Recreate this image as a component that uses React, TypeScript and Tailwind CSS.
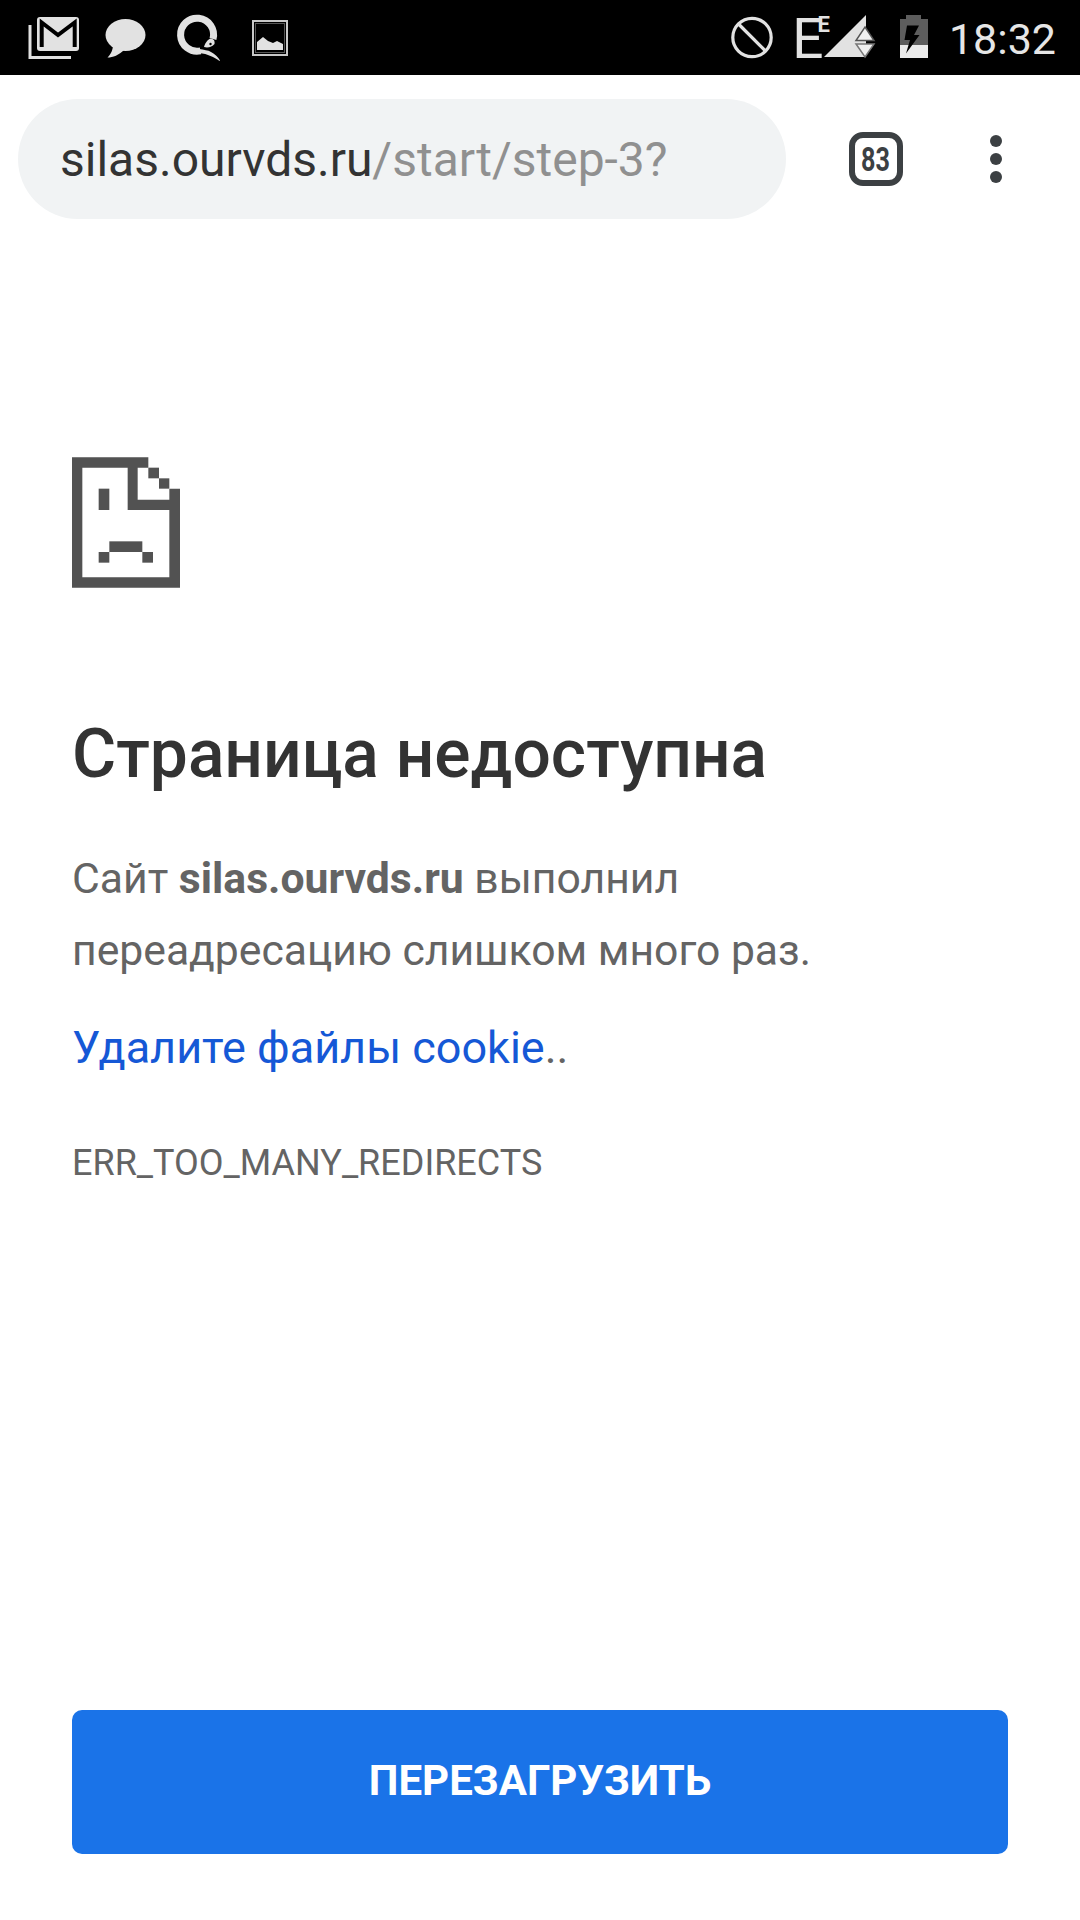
// Chrome on Android, "page unavailable" error screen.
const ICON = "#e2e2e2";

function StatusLeft() {
  return (
    <div className="flex items-start">
      <svg className="ml-[27px]" width="54" height="52" viewBox="27 12 54 52">
        <path d="M30 25V57.5H71" fill="none" stroke={ICON} strokeWidth="3" />
        <rect x="37" y="17" width="42" height="34" rx="3" fill={ICON} />
        <path d="M41.7 47V22.5L58 35L74.7 22.5V47" fill="none" stroke="#000" strokeWidth="4" />
      </svg>
      <svg className="ml-[24px]" width="41" height="52" viewBox="105 12 41 52">
        <ellipse cx="125.5" cy="35" rx="20" ry="16" fill={ICON} />
        <path d="M113 44C113 50 111 54 107.5 57.5C113 57.5 119 55 124 50Z" fill={ICON} />
      </svg>
      <svg className="ml-[29px]" width="46" height="52" viewBox="175 12 46 52">
        <path d="M213 39A16.5 16.5 0 1 0 200.5 50.8" fill="none" stroke={ICON} strokeWidth="7" />
        <path d="M199 49C204 50 208 50 211 52C215 54 218 57 220 60.5L219.5 61C214 57 208 54 199 53Z" fill={ICON} />
        <path d="M204 47C205 43 208 39 211 38.5C214 39 215 41 214.5 44C212 47 208 48 204 47Z" fill={ICON} />
        <circle cx="210.5" cy="44" r="1.2" fill="#000" />
      </svg>
      <svg className="ml-[31px]" width="36" height="52" viewBox="252 12 36 52">
        <rect x="253" y="21" width="34" height="34" fill="none" stroke="#c8c8c8" strokeWidth="2" />
        <rect x="255.5" y="23.5" width="29" height="29" fill="none" stroke="#555" strokeWidth="1" />
        <path d="M257 50V42L263 37L268 41L273 43L277 41L283 44V50Z" fill={ICON} />
      </svg>
    </div>
  );
}

function StatusRight() {
  return (
    <div className="ml-auto flex items-start">
      <svg width="42" height="52" viewBox="732 12 42 52">
        <circle cx="753" cy="37.5" r="19.2" fill="none" stroke={ICON} strokeWidth="3.2" />
        <path d="M739.5 24L766.5 51" stroke={ICON} strokeWidth="3.2" />
      </svg>
      <span className="ml-[19px] text-[55px] leading-[55px] tracking-[-7px] text-[#e2e2e2]">E</span>
      <span className="ml-[1px] mt-[2px] text-[22px] font-bold leading-[22px] text-[#e2e2e2]">E</span>
      <svg className="ml-[-6px]" width="52" height="52" viewBox="824 12 52 52">
        <path d="M824 57L866 15V57Z" fill={ICON} />
        <path d="M865 27L874 40.5H856Z" fill="#f0f0f0" stroke="#555" strokeWidth="1.5" />
        <path d="M865 57L874 44H856Z" fill="#f0f0f0" stroke="#777" strokeWidth="1.5" />
      </svg>
      <svg className="ml-[23px]" width="30" height="52" viewBox="899 12 30 52">
        <path d="M906 15H921V19H928V45H900V19H906Z" fill="#5d5d5d" />
        <rect x="900" y="45" width="28" height="13" fill="#ebebeb" />
        <path d="M907 25.5H919L914 35H919.5L906 53.5L910 40H904.5Z" fill="#000" />
      </svg>
      <span className="ml-[20px] mr-[24px] mt-[4px] text-[43px] leading-[47px] text-[#e6e6e6]">18:32</span>
    </div>
  );
}

function SadTab() {
  return (
    <svg width="108" height="131" viewBox="66 52 324 391" fill="#525252">
      <path d="M66 52H295V83H263V179H358V146H390V443H66ZM97 83V412H358V210H233V83Z" fillRule="evenodd" />
      <rect x="295" y="83" width="32" height="32" />
      <rect x="327" y="115" width="31" height="31" />
      <rect x="146" y="146" width="32" height="64" />
      <rect x="178" y="304" width="99" height="32" />
      <rect x="146" y="336" width="32" height="32" />
      <rect x="277" y="336" width="32" height="32" />
    </svg>
  );
}

export default function App() {
  return (
    <div className="flex min-h-[1920px] flex-col bg-white font-['Roboto',sans-serif]">
      <div className="flex h-[75px] items-start justify-between bg-black pt-3">
        <StatusLeft />
        <StatusRight />
      </div>

      <div className="flex h-[168px] items-center">
        <div className="ml-[18px] flex h-[120px] w-[768px] items-center rounded-[60px] bg-[#f1f3f4] pl-[42px] pt-[2px] text-[48px] text-[#909090]">
          <span className="text-[#333333]">silas.ourvds.ru</span>/start/step-3?
        </div>
        <div className="ml-[63px] flex h-[54px] w-[54px] items-center justify-center rounded-[14px] border-[6px] border-[#3c4043] text-[34px] font-bold text-[#3c4043]">
          <span className="scale-x-[0.74]">83</span>
        </div>
        <div className="ml-[87px] flex flex-col gap-[6px]">
          <div className="h-3 w-3 rounded-full bg-[#3c4043]" />
          <div className="h-3 w-3 rounded-full bg-[#3c4043]" />
          <div className="h-3 w-3 rounded-full bg-[#3c4043]" />
        </div>
      </div>

      <div className="flex flex-1 flex-col px-[72px]">
        <div className="mt-[214px]">
          <SadTab />
        </div>
        <h1 className="mt-[130px] text-[67.7px] font-medium leading-[72px] text-[#333333]">Страница недоступна</h1>
        <p className="mt-[52px] text-[42.7px] leading-[72px] text-[#646464]">
          Сайт <b className="font-bold">silas.ourvds.ru</b> выполнил
          <br />
          переадресацию слишком много раз.
        </p>
        <p className="mt-[26px] text-[45px] leading-[72px] text-[#646464]">
          <span className="text-[#1558d6]">Удалите файлы cookie</span>..
        </p>
        <p className="mt-[55px] text-[36px] leading-[48px] text-[#646464]">ERR_TOO_MANY_REDIRECTS</p>
        <div className="mb-[66px] mt-auto flex h-[144px] items-center justify-center rounded-[10px] bg-[#1a73e8] pb-[3px] text-[42px] font-bold text-white">
          ПЕРЕЗАГРУЗИТЬ
        </div>
      </div>
    </div>
  );
}
